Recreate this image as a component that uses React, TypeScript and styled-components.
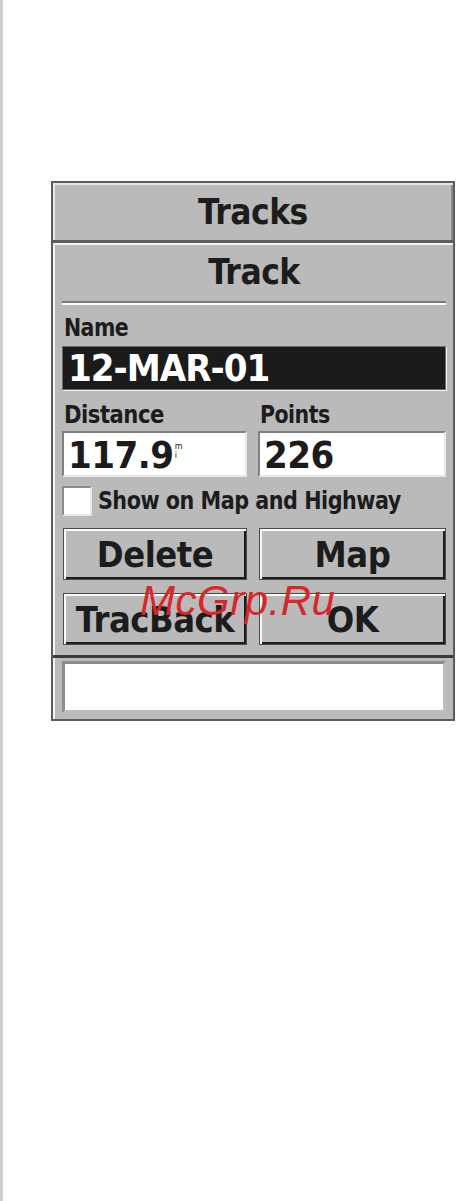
import React from 'react'
import styled, { createGlobalStyle } from 'styled-components'

const GlobalStyle = createGlobalStyle`
  html, body { margin: 0; padding: 0; background: #fff; }
  #root { min-height: 1201px; }
`

const lcd = `"DejaVu Sans Condensed", "DejaVu Sans", sans-serif`

const Page = styled.div`
  position: relative;
  min-height: 1201px;
  border-left: 3px solid #cfcfcf;
  padding: 181px 0 0 48px;
  box-sizing: border-box;
`

const Device = styled.div`
  width: 404px;
  box-sizing: border-box;
  border: 2px solid #5c5c5c;
  background: #bababa;
  font-family: ${lcd};
  font-weight: 700;
  color: #1c1c1c;
`

const TitleBar = styled.div`
  height: 57px;
  display: flex;
  align-items: center;
  justify-content: center;
  font-size: 35px;
  letter-spacing: -0.5px;
  border-bottom: 3px solid #5e5e5e;
  box-shadow: inset 2px 2px 0 #e6e6e6, inset -2px 0 0 #8a8a8a;
`

const Panel = styled.div`
  padding: 0 7px 0 9px;
  box-shadow: inset 2px 2px 0 #f4f4f4;
`

const PanelTitle = styled.div`
  height: 58px;
  display: flex;
  align-items: center;
  justify-content: center;
  font-size: 35px;
  letter-spacing: -0.5px;
  border-bottom: 2px solid #7a7a7a;
  box-shadow: 0 2px 0 #fbfbfb;
`

const Label = styled.div<{ $stretch?: number }>`
  font-size: 24px;
  line-height: 26px;
  letter-spacing: -0.5px;
  transform: scaleX(${p => p.$stretch ?? 0.95});
  transform-origin: left;
  padding-left: 2px;
  white-space: nowrap;
`

const NameLabel = styled(Label)`
  margin-top: 12px;
`

const NameField = styled.div`
  height: 42px;
  background: #1b1b1b;
  color: #fff;
  font-size: 38px;
  line-height: 42px;
  padding-left: 5px;
  letter-spacing: -1px;
  border: 1px solid #6a6a6a;
  box-shadow: 1px 1px 0 #f2f2f2;
  margin-top: 5px;
`

const Columns = styled.div`
  display: grid;
  grid-template-columns: 185px 188px;
  column-gap: 11px;
  margin-top: 12px;
`

const ValueField = styled.div`
  height: 46px;
  margin-top: 3px;
  box-sizing: border-box;
  background: #fff;
  border: 2px solid;
  border-color: #808080 #e8e8e8 #e8e8e8 #808080;
  font-size: 38px;
  line-height: 44px;
  padding-left: 4px;
  letter-spacing: -0.5px;
  display: flex;
  align-items: flex-start;
`

// stacked "m" over "i" unit marker
const Unit = styled.span`
  display: flex;
  flex-direction: column;
  font-size: 9px;
  line-height: 9px;
  margin: 9px 0 0 1px;
  font-weight: 400;
`

const CheckRow = styled.div`
  display: flex;
  align-items: center;
  gap: 4px;
  margin-top: 9px;
`

const CheckBox = styled.div`
  width: 30px;
  height: 30px;
  box-sizing: border-box;
  background: #fff;
  border: 2px solid;
  border-color: #8a8a8a #e8e8e8 #e8e8e8 #8a8a8a;
`

const ButtonGrid = styled.div`
  display: grid;
  grid-template-columns: 184px 187px;
  column-gap: 12px;
  row-gap: 13px;
  padding: 12px 0 10px 1px;
`

const Button = styled.div`
  height: 52px;
  box-sizing: border-box;
  display: flex;
  align-items: center;
  justify-content: center;
  border: 1px solid #4a4a4a;
  box-shadow: inset 2px 2px 0 #fafafa, inset -2px -2px 0 #1e1e1e;
  background: #bababa;
  font-size: 36px;
  letter-spacing: -0.5px;
`

const Status = styled.div`
  border-top: 3px solid #3c3c3c;
  padding: 3px 7px 6px 9px;
  box-shadow: inset 2px 0 0 #f4f4f4;
`

const StatusField = styled.div`
  height: 52px;
  box-sizing: border-box;
  background: #fff;
  border: 3px solid;
  border-color: #8c8c8c #bdbdbd #bdbdbd #8c8c8c;
`

const Watermark = styled.div`
  position: absolute;
  left: 137px;
  top: 577px;
  font-family: "Liberation Sans", Arial, sans-serif;
  font-style: italic;
  font-size: 42px;
  color: #d8262a;
  letter-spacing: 0.5px;
`

export default function App() {
  return (
    <>
      <GlobalStyle />
      <Page>
        <Device>
          <TitleBar>Tracks</TitleBar>
          <Panel>
            <PanelTitle>Track</PanelTitle>
            <NameLabel>Name</NameLabel>
            <NameField>12-MAR-01</NameField>
            <Columns>
              <div>
                <Label $stretch={0.98}>Distance</Label>
                <ValueField>
                  117.9
                  <Unit>
                    <span>m</span>
                    <span>i</span>
                  </Unit>
                </ValueField>
              </div>
              <div>
                <Label>Points</Label>
                <ValueField>226</ValueField>
              </div>
            </Columns>
            <CheckRow>
              <CheckBox />
              <Label $stretch={0.96}>Show on Map and Highway</Label>
            </CheckRow>
            <ButtonGrid>
              <Button>Delete</Button>
              <Button>Map</Button>
              <Button>TracBack</Button>
              <Button>OK</Button>
            </ButtonGrid>
          </Panel>
          <Status>
            <StatusField />
          </Status>
        </Device>
        <Watermark>McGrp.Ru</Watermark>
      </Page>
    </>
  )
}
